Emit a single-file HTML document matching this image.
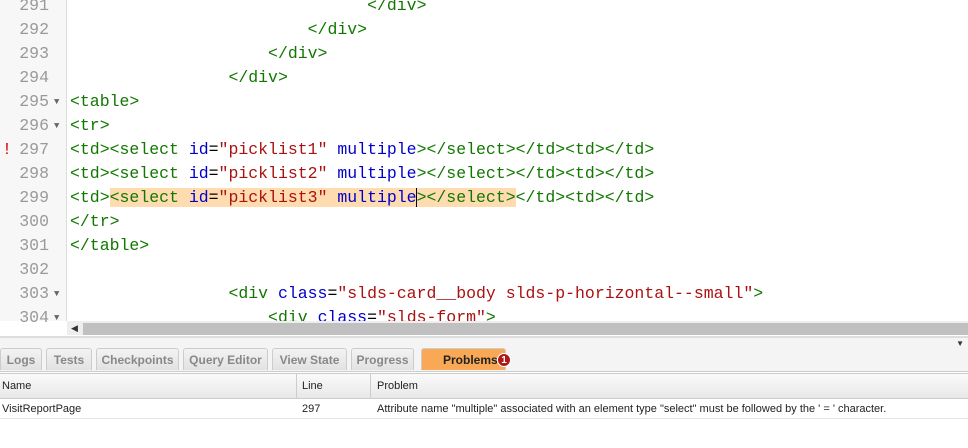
<!DOCTYPE html>
<html><head><meta charset="utf-8"><style>
body{margin:0;width:968px;height:448px;overflow:hidden;background:#fff;position:relative;font-family:"Liberation Sans",sans-serif}
.gut{position:absolute;left:0;top:0;width:66px;height:321px;background:#f7f7f7;border-right:1px solid #ddd}
.ln{position:absolute;left:0;width:968px;height:24px;line-height:24px;font-family:"Liberation Mono",monospace;font-size:16.5px;white-space:pre}
.ln .n{position:absolute;left:0;width:49px;text-align:right;color:#999}
.ln .a{position:absolute;left:54px;top:0;font-size:9px;color:#666}
.ln .c{position:absolute;left:70px}
.t{color:#170}.at{color:#00c}.s{color:#a11}.o{color:#000}
.hl{background:#ffdcb0}
.sb{position:absolute;top:321px;left:67px;width:901px;height:14px;background:#eee}
.th{position:absolute;top:323px;left:83px;width:885px;height:12px;background:#c0c0c0}
.tabs{position:absolute;top:336px;left:0;width:968px;height:33px;background:#f4f4f4;border-top:2px solid #ddd;border-bottom:1px solid #ccc}
.tab{position:absolute;top:10px;height:22px;line-height:22px;border:1px solid #ccc;border-bottom:none;border-radius:3px 3px 0 0;background:linear-gradient(#f3f3f3,#e2e2e2);color:#888;font-weight:bold;font-size:12px;text-align:center;box-sizing:border-box}
.hd{position:absolute;top:373px;left:0;width:968px;height:24px;background:linear-gradient(#fafafa,#e8e8e8);border-top:1px solid #ccc;border-bottom:1px solid #ccc;font-size:11px;color:#222}
.hd div,.row div{position:absolute;top:0;height:100%;line-height:24px;padding-left:2px}
.row{position:absolute;top:398px;left:0;width:968px;height:20px;border-bottom:1px solid #e4e4e4;font-size:11px;color:#222}
.row div{line-height:22px}
</style></head><body>
<div class="gut"></div>
<div class="ln" style="top:-6px"><span class="n">291</span><span class="c">                              <span class="t">&lt;/div&gt;</span></span></div>
<div class="ln" style="top:18px"><span class="n">292</span><span class="c">                        <span class="t">&lt;/div&gt;</span></span></div>
<div class="ln" style="top:42px"><span class="n">293</span><span class="c">                    <span class="t">&lt;/div&gt;</span></span></div>
<div class="ln" style="top:66px"><span class="n">294</span><span class="c">                <span class="t">&lt;/div&gt;</span></span></div>
<div class="ln" style="top:90px"><span class="n">295</span><span class="a">▼</span><span class="c"><span class="t">&lt;table&gt;</span></span></div>
<div class="ln" style="top:114px"><span class="n">296</span><span class="a">▼</span><span class="c"><span class="t">&lt;tr&gt;</span></span></div>
<div class="ln" style="top:138px"><span style="position:absolute;left:2px;color:#d00">!</span><span class="n">297</span><span class="c"><span class="t">&lt;td&gt;&lt;select</span> <span class="at">id</span>=<span class="s">"picklist1"</span> <span class="at">multiple</span><span class="t">&gt;&lt;/select&gt;&lt;/td&gt;&lt;td&gt;&lt;/td&gt;</span></span></div>
<div class="ln" style="top:162px"><span class="n">298</span><span class="c"><span class="t">&lt;td&gt;&lt;select</span> <span class="at">id</span>=<span class="s">"picklist2"</span> <span class="at">multiple</span><span class="t">&gt;&lt;/select&gt;&lt;/td&gt;&lt;td&gt;&lt;/td&gt;</span></span></div>
<div class="ln" style="top:186px"><span class="n">299</span><span class="c"><span class="t">&lt;td&gt;</span><span class="hl"><span class="t">&lt;select</span> <span class="at">id</span>=<span class="s">"picklist3"</span> <span class="at">multiple</span><span class="t" style="border-left:1px solid #000;margin-left:-1px">&gt;&lt;/select&gt;</span></span><span class="t">&lt;/td&gt;&lt;td&gt;&lt;/td&gt;</span></span></div>
<div class="ln" style="top:210px"><span class="n">300</span><span class="c"><span class="t">&lt;/tr&gt;</span></span></div>
<div class="ln" style="top:234px"><span class="n">301</span><span class="c"><span class="t">&lt;/table&gt;</span></span></div>
<div class="ln" style="top:258px"><span class="n">302</span></div>
<div class="ln" style="top:282px"><span class="n">303</span><span class="a">▼</span><span class="c">                <span class="t">&lt;div</span> <span class="at">class</span>=<span class="s">"slds-card__body slds-p-horizontal--small"</span><span class="t">&gt;</span></span></div>
<div class="ln" style="top:306px"><span class="n">304</span><span class="a">▼</span><span class="c">                    <span class="t">&lt;div</span> <span class="at">class</span>=<span class="s">"slds-form"</span><span class="t">&gt;</span></span></div>
<div class="sb"></div><div class="th"></div>
<div style="position:absolute;top:323px;left:71px;font-size:9px;color:#333">◀</div>
<div class="tabs">
<div class="tab" style="left:0;width:42px">Logs</div>
<div class="tab" style="left:46px;width:46px">Tests</div>
<div class="tab" style="left:96px;width:83px">Checkpoints</div>
<div class="tab" style="left:183px;width:85px">Query Editor</div>
<div class="tab" style="left:272px;width:75px">View State</div>
<div class="tab" style="left:351px;width:63px">Progress</div>
<div class="tab" style="left:421px;width:85px;background:#f9a956;color:#222;text-align:left;padding-left:21px">Problems<span style="position:absolute;left:75px;top:4px;width:14px;height:14px;border-radius:7px;background:#b01818;color:#fff;font-size:10px;line-height:14px;text-align:center;border:1px solid #fff;box-sizing:border-box">1</span></div>
<div style="position:absolute;right:4px;top:1px;font-size:8px;color:#333">▼</div>
</div>
<div class="hd"><div style="left:0">Name</div><div style="left:296px;border-left:1px solid #ccc;padding-left:5px">Line</div><div style="left:370px;border-left:1px solid #ccc;padding-left:6px">Problem</div></div>
<div class="row"><div style="left:0">VisitReportPage</div><div style="left:300px">297</div><div style="left:375px">Attribute name "multiple" associated with an element type "select" must be followed by the ' = ' character.</div></div>
</body></html>
